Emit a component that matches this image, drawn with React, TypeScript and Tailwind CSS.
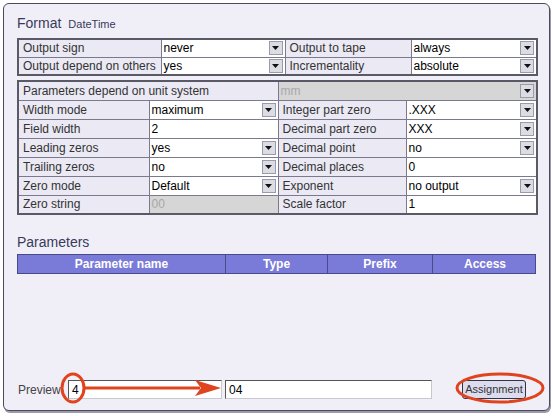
const Arrow = () => (
  <span className="inline-flex h-[14px] w-[14px] items-center justify-center border border-[#9a9aa8] bg-[#dcdce4]">
    <svg width="7" height="4" viewBox="0 0 7 4">
      <path d="M0 0h7L3.5 4z" fill="#111" />
    </svg>
  </span>
);

const Sel = ({ v, off }: { v: string; off?: boolean }) => (
  <td className={`border border-[#7a7a8c] p-0 ${off ? "bg-[#d6d6d6]" : "bg-white"}`}>
    <div className={`flex items-center justify-between pl-[2px] pr-[2px] ${off ? "text-[#a8a8a8]" : "text-black"}`}>
      <span>{v}</span>
      <Arrow />
    </div>
  </td>
);

const Txt = ({ v, off }: { v: string; off?: boolean }) => (
  <td className={`border border-[#7a7a8c] pl-[2px] ${off ? "bg-[#d6d6d6] text-[#a8a8a8]" : "bg-white text-black"}`}>{v}</td>
);

const Lbl = ({ t, span }: { t: string; span?: number }) => (
  <td colSpan={span} className="border border-[#7a7a8c] bg-[#eae9f4] pl-[4px] text-[#333]">
    {t}
  </td>
);

export default function App() {
  return (
    <div
      className="relative h-[416px] w-[553px] bg-white p-[3px] text-[12px] leading-none"
      style={{ fontFamily: '"Liberation Sans", Arial, sans-serif' }}
    >
      <div className="flex h-[408px] flex-col rounded-[6px] border border-[#4a4a5a] bg-[#f0eff8] px-[13px] pt-[12px] pb-[11px] shadow-[1px_2px_0_#9a9aaa]">
        <div className="flex items-baseline gap-[7px] text-[#3a3a5a]">
          <span className="text-[14px]">Format</span>
          <span className="text-[11px]">DateTime</span>
        </div>

        <table className="mt-[8px] w-[519px] table-fixed border-collapse border-2 border-[#5a5a66]">
          <colgroup>
            <col className="w-[143px]" />
            <col className="w-[124px]" />
            <col className="w-[126px]" />
            <col className="w-[126px]" />
          </colgroup>
          <tbody>
            <tr className="h-[18px]">
              <Lbl t="Output sign" />
              <Sel v="never" />
              <Lbl t="Output to tape" />
              <Sel v="always" />
            </tr>
            <tr className="h-[18px]">
              <Lbl t="Output depend on others" />
              <Sel v="yes" />
              <Lbl t="Incrementality" />
              <Sel v="absolute" />
            </tr>
          </tbody>
        </table>

        <table className="mt-[4px] w-[519px] table-fixed border-collapse border-2 border-[#5a5a66]">
          <colgroup>
            <col className="w-[131px]" />
            <col className="w-[129px]" />
            <col className="w-[128px]" />
            <col className="w-[131px]" />
          </colgroup>
          <tbody>
            <tr className="h-[19px]">
              <Lbl t="Parameters depend on unit system" span={2} />
              <td colSpan={2} className="border border-[#7a7a8c] bg-[#d6d6d6] p-0">
                <div className="flex items-center justify-between pl-[2px] pr-[2px] text-[#a8a8a8]">
                  <span>mm</span>
                  <Arrow />
                </div>
              </td>
            </tr>
            <tr className="h-[19px]">
              <Lbl t="Width mode" />
              <Sel v="maximum" />
              <Lbl t="Integer part zero" />
              <Sel v=".XXX" />
            </tr>
            <tr className="h-[19px]">
              <Lbl t="Field width" />
              <Txt v="2" />
              <Lbl t="Decimal part zero" />
              <Sel v="XXX" />
            </tr>
            <tr className="h-[19px]">
              <Lbl t="Leading zeros" />
              <Sel v="yes" />
              <Lbl t="Decimal point" />
              <Sel v="no" />
            </tr>
            <tr className="h-[19px]">
              <Lbl t="Trailing zeros" />
              <Sel v="no" />
              <Lbl t="Decimal places" />
              <Txt v="0" />
            </tr>
            <tr className="h-[19px]">
              <Lbl t="Zero mode" />
              <Sel v="Default" />
              <Lbl t="Exponent" />
              <Sel v="no output" />
            </tr>
            <tr className="h-[19px]">
              <Lbl t="Zero string" />
              <Txt v="00" off />
              <Lbl t="Scale factor" />
              <Txt v="1" />
            </tr>
          </tbody>
        </table>

        <div className="mt-[20px] text-[14px] text-[#3a3a5a]">Parameters</div>

        <div className="mt-[5px] grid h-[20px] w-[519px] grid-cols-[208px_102px_105px_104px] border border-[#4a4a8a] bg-[#7a7ad8] text-[12px] font-bold text-white">
          <div className="flex items-center justify-center border-r border-[#4a4a8a]">Parameter name</div>
          <div className="flex items-center justify-center border-r border-[#4a4a8a]">Type</div>
          <div className="flex items-center justify-center border-r border-[#4a4a8a]">Prefix</div>
          <div className="flex items-center justify-center">Access</div>
        </div>

        <div className="mt-auto flex items-center">
          <span className="w-[51px] pl-[1px] text-[#444]">Preview</span>
          <div className="flex h-[19px] w-[154px] items-center border border-t-[#555] border-l-[#555] border-b-[#c8c8d0] border-r-[#c8c8d0] bg-white pl-[3px]">4</div>
          <div className="ml-[3px] flex h-[19px] w-[207px] items-center border border-t-[#555] border-l-[#555] border-b-[#c8c8d0] border-r-[#c8c8d0] bg-white pl-[3px]">04</div>
          <button className="ml-[30px] h-[19px] w-[64px] rounded-[3px] border border-[#333344] bg-[#dcdcee] text-[11px] text-[#333]">
            Assignment
          </button>
        </div>
      </div>

      <svg className="pointer-events-none absolute inset-0" width="553" height="416">
        <ellipse cx="73" cy="388" rx="11" ry="14" fill="none" stroke="#e0441e" strokeWidth="3" />
        <line x1="84" y1="388" x2="200" y2="388" stroke="#e0441e" strokeWidth="3" />
        <path d="M195 380 L221 388 L195 396 L201 388 Z" fill="#e0441e" />
        <ellipse cx="500" cy="388" rx="43" ry="14" fill="none" stroke="#e0441e" strokeWidth="3" />
      </svg>
    </div>
  );
}
